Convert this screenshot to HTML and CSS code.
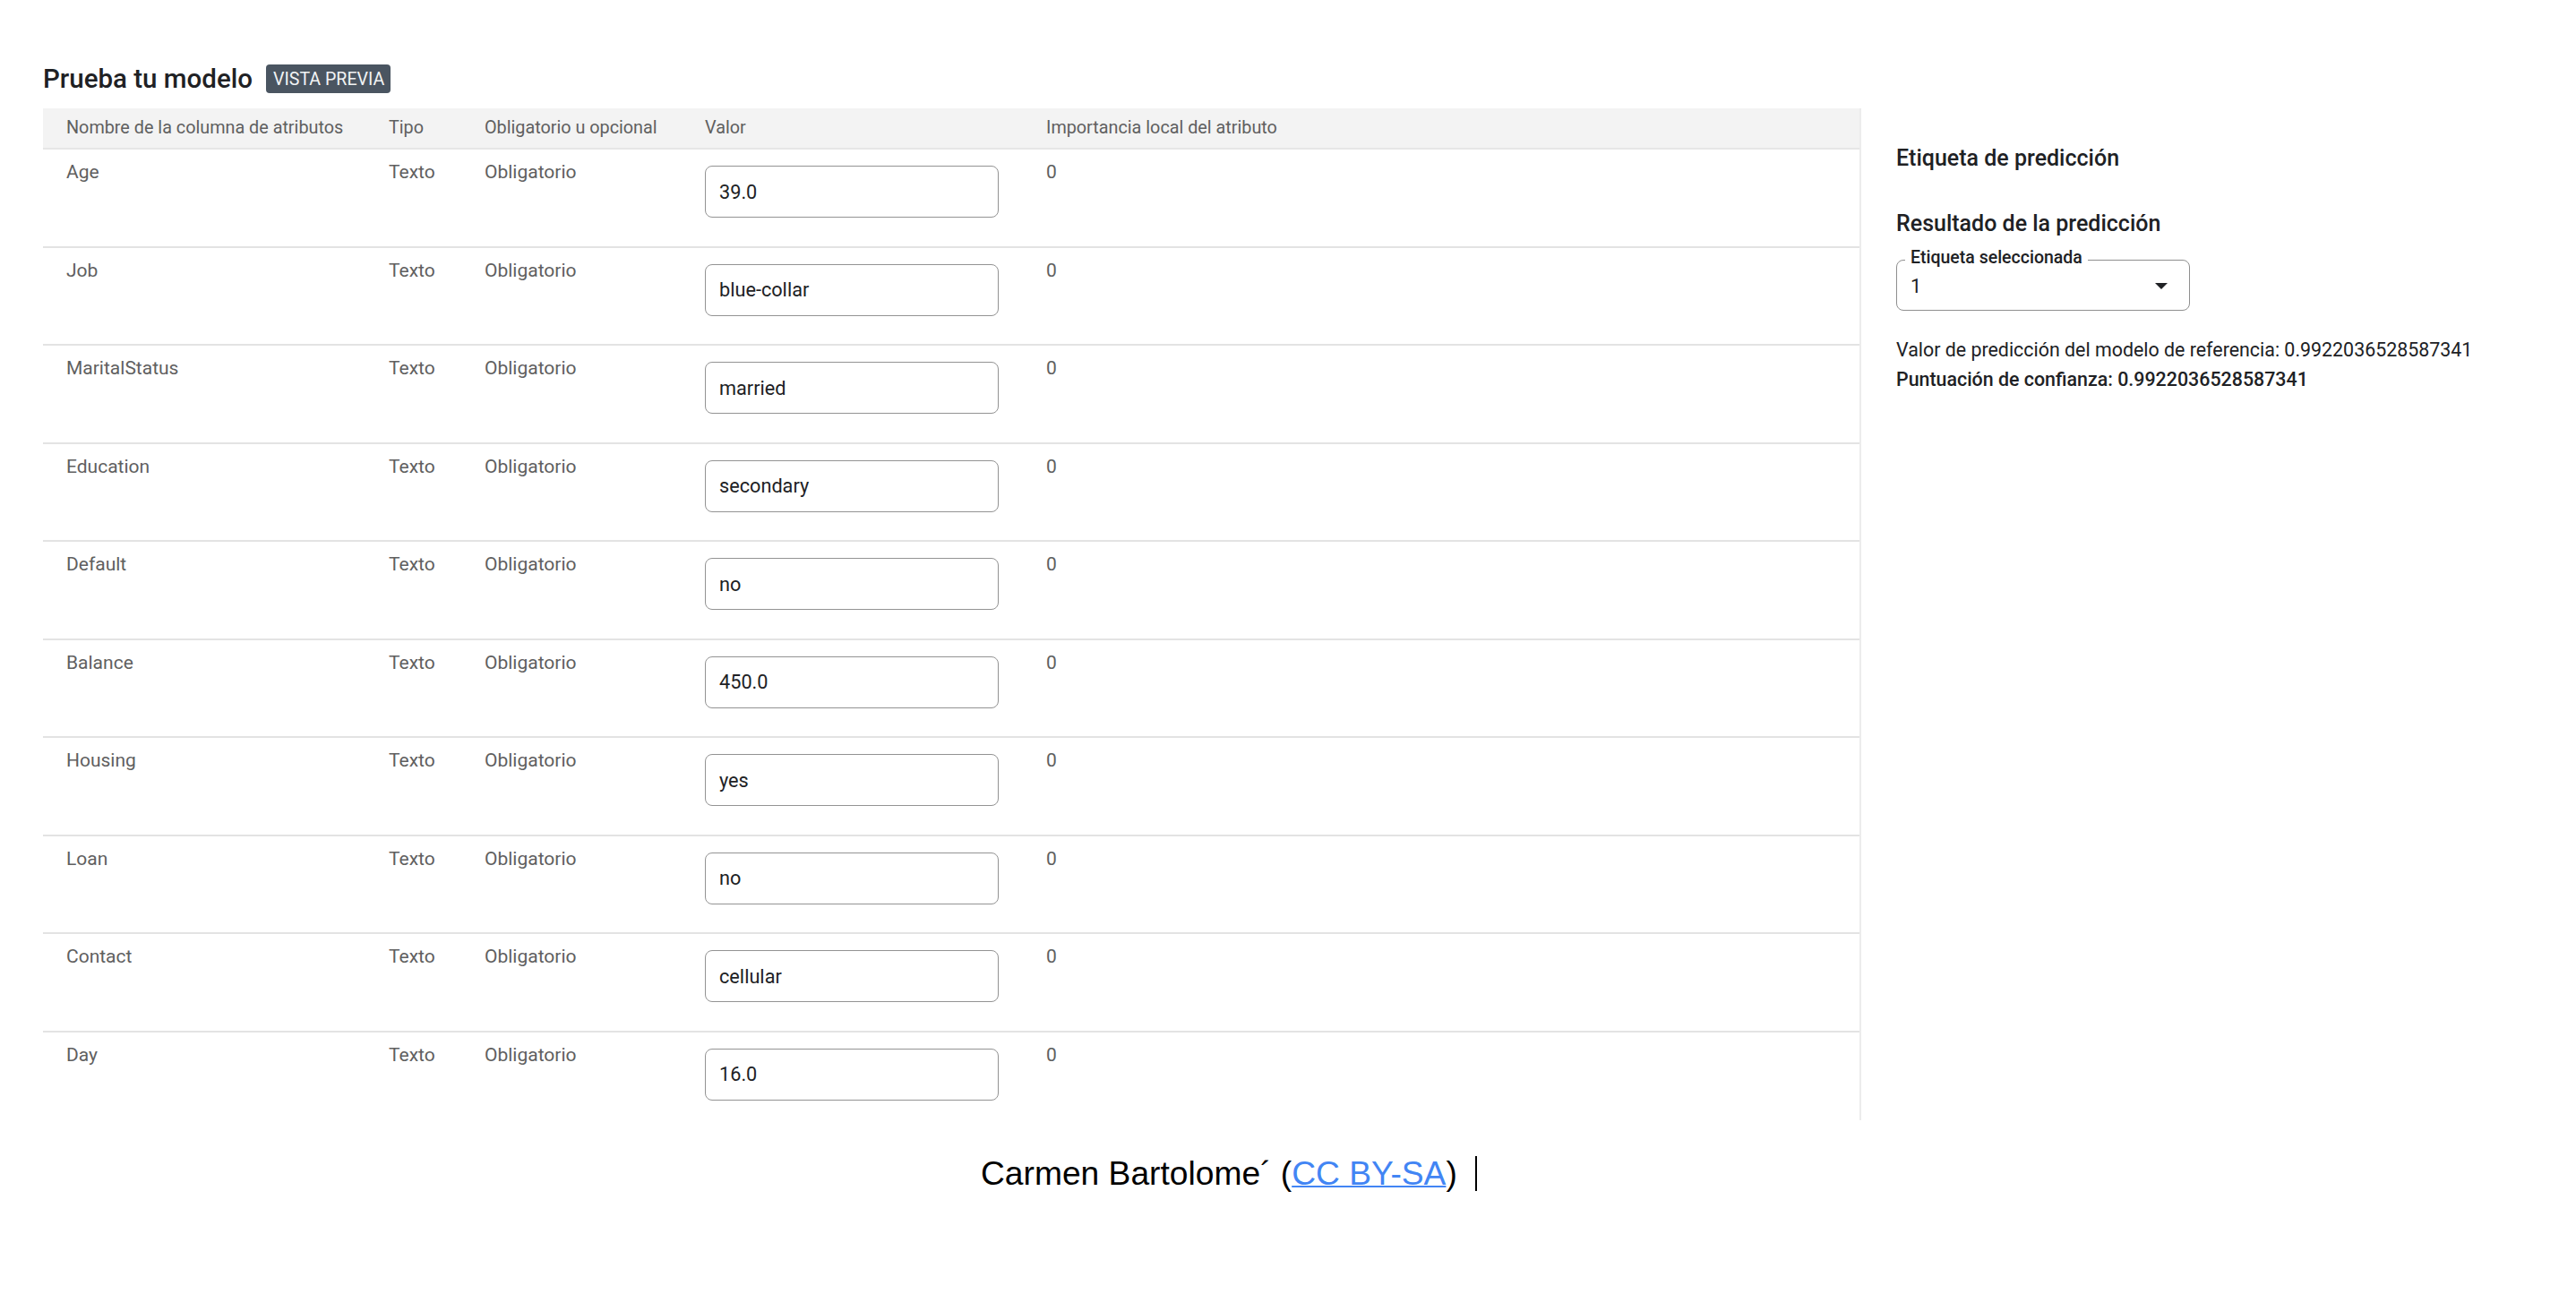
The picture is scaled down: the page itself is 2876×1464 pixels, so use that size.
FILE: index.html
```html
<!DOCTYPE html>
<html lang="es">
<head>
<meta charset="utf-8">
<title>Prueba tu modelo</title>
<link rel="stylesheet" href="styles.css">
</head>
<body>
<main class="page">
  <div class="title-row">
    <h1 class="title">Prueba tu modelo</h1>
    <span class="badge">VISTA PREVIA</span>
  </div>
  <div class="workspace">
    <div class="table-wrap">
      <div class="grid-row head-row">
        <div class="th">Nombre de la columna de atributos</div>
        <div class="th">Tipo</div>
        <div class="th">Obligatorio u opcional</div>
        <div class="th">Valor</div>
        <div class="th">Importancia local del atributo</div>
      </div>
      <div class="grid-row body-row">
        <div class="td">Age</div><div class="td">Texto</div><div class="td">Obligatorio</div>
        <div class="td-input"><div class="field">39.0</div></div><div class="td">0</div>
      </div>
      <div class="grid-row body-row">
        <div class="td">Job</div><div class="td">Texto</div><div class="td">Obligatorio</div>
        <div class="td-input"><div class="field">blue-collar</div></div><div class="td">0</div>
      </div>
      <div class="grid-row body-row">
        <div class="td">MaritalStatus</div><div class="td">Texto</div><div class="td">Obligatorio</div>
        <div class="td-input"><div class="field">married</div></div><div class="td">0</div>
      </div>
      <div class="grid-row body-row">
        <div class="td">Education</div><div class="td">Texto</div><div class="td">Obligatorio</div>
        <div class="td-input"><div class="field">secondary</div></div><div class="td">0</div>
      </div>
      <div class="grid-row body-row">
        <div class="td">Default</div><div class="td">Texto</div><div class="td">Obligatorio</div>
        <div class="td-input"><div class="field">no</div></div><div class="td">0</div>
      </div>
      <div class="grid-row body-row">
        <div class="td">Balance</div><div class="td">Texto</div><div class="td">Obligatorio</div>
        <div class="td-input"><div class="field">450.0</div></div><div class="td">0</div>
      </div>
      <div class="grid-row body-row">
        <div class="td">Housing</div><div class="td">Texto</div><div class="td">Obligatorio</div>
        <div class="td-input"><div class="field">yes</div></div><div class="td">0</div>
      </div>
      <div class="grid-row body-row">
        <div class="td">Loan</div><div class="td">Texto</div><div class="td">Obligatorio</div>
        <div class="td-input"><div class="field">no</div></div><div class="td">0</div>
      </div>
      <div class="grid-row body-row">
        <div class="td">Contact</div><div class="td">Texto</div><div class="td">Obligatorio</div>
        <div class="td-input"><div class="field">cellular</div></div><div class="td">0</div>
      </div>
      <div class="grid-row body-row">
        <div class="td">Day</div><div class="td">Texto</div><div class="td">Obligatorio</div>
        <div class="td-input"><div class="field">16.0</div></div><div class="td">0</div>
      </div>
    </div>
    <aside class="result-panel">
      <h2 class="panel-heading">Etiqueta de predicción</h2>
      <h2 class="panel-heading second">Resultado de la predicción</h2>
      <div class="select-box">
        <span class="select-label">Etiqueta seleccionada</span>
        <span class="select-value">1</span>
        <span class="select-arrow"></span>
      </div>
      <p class="result-line">Valor de predicción del modelo de referencia: 0.9922036528587341</p>
      <p class="result-line strong">Puntuación de confianza: 0.9922036528587341</p>
    </aside>
  </div>
</main>
<footer class="credit">Carmen Bartolome´ (<a class="credit-link" href="#">CC BY-SA</a>)<span class="caret"></span></footer>
</body>
</html>
```

FILE: styles.css
```css
html, body {
  margin: 0;
  padding: 0;
  background: #ffffff;
}

body {
  font-family: Roboto, "Noto Sans", "Liberation Sans", sans-serif;
  color: #202124;
}

.page {
  padding: 72px 0 0 48px;
}

.title-row {
  display: flex;
  align-items: center;
  gap: 15px;
  height: 32px;
  margin-bottom: 17px;
}

.title {
  margin: 0;
  font-size: 29.5px;
  font-weight: 500;
  line-height: 32px;
  color: #202124;
}

.badge {
  display: inline-flex;
  align-items: center;
  height: 32px;
  padding: 0 7px 0 8px;
  box-sizing: border-box;
  border-radius: 4px;
  background: #4a5561;
  color: #f1f3f4;
  font-size: 19.6px;
}

.workspace {
  display: flex;
  height: 1130px;
}

.table-wrap {
  width: 2028px;
  flex: none;
  overflow: hidden;
}

.grid-row {
  display: grid;
  grid-template-columns: 360px 107px 246px 381px 1fr;
  padding-left: 26px;
  box-sizing: border-box;
}

.head-row {
  height: 46px;
  align-items: center;
  background: #f3f3f3;
  border-bottom: 2px solid #e6e6e6;
}

.th {
  font-size: 19.8px;
  line-height: 28px;
  color: #5f6060;
  white-space: nowrap;
}

.body-row {
  height: 109.5px;
  border-bottom: 2px solid #e3e3e3;
  align-items: start;
}

.td {
  padding-top: 11px;
  font-size: 21px;
  line-height: 28px;
  color: #606060;
}

.td-input {
  padding-top: 18px;
}

.field {
  width: 328px;
  height: 58px;
  box-sizing: border-box;
  border: 1.5px solid #939393;
  border-radius: 8px;
  padding-left: 15px;
  display: flex;
  align-items: center;
  font-size: 21.7px;
  color: #202124;
}

.result-panel {
  flex: 1;
  border-left: 2px solid #ececec;
  padding: 40px 40px 0 39px;
}

.panel-heading {
  margin: 0;
  font-size: 25px;
  font-weight: 500;
  line-height: 32px;
  color: #202124;
}

.panel-heading.second {
  margin-top: 41px;
}

.select-box {
  position: relative;
  margin-top: 24px;
  width: 328px;
  height: 57px;
  box-sizing: border-box;
  border: 1.5px solid #8f8f8f;
  border-radius: 8px;
  display: flex;
  align-items: center;
  padding-left: 15px;
}

.select-label {
  position: absolute;
  left: 9px;
  top: -15px;
  padding: 0 6px;
  background: #ffffff;
  font-size: 19.5px;
  font-weight: 500;
  line-height: 24px;
  color: #202124;
}

.select-value {
  font-size: 21.7px;
  color: #202124;
  padding-top: 2px;
}

.select-arrow {
  position: absolute;
  right: 24px;
  top: 50%;
  margin-top: -3px;
  width: 0;
  height: 0;
  border-left: 7px solid transparent;
  border-right: 7px solid transparent;
  border-top: 7px solid #202124;
}

.result-line {
  margin: 0;
  font-size: 21.4px;
  line-height: 33px;
  color: #202124;
  white-space: nowrap;
}

.result-line:first-of-type {
  margin-top: 27px;
}

.result-line.strong {
  font-weight: 500;
}

.credit {
  margin-top: 37px;
  padding-left: 1095px;
  font-family: "Liberation Sans", Arial, sans-serif;
  font-size: 37.2px;
  line-height: 44px;
  color: #000000;
  display: flex;
  align-items: center;
}

.credit-link {
  color: #4285f4;
  text-decoration: underline;
  text-decoration-thickness: 2px;
}

.caret {
  display: inline-block;
  width: 2px;
  height: 39px;
  margin-left: 20px;
  background: #000000;
}
```
